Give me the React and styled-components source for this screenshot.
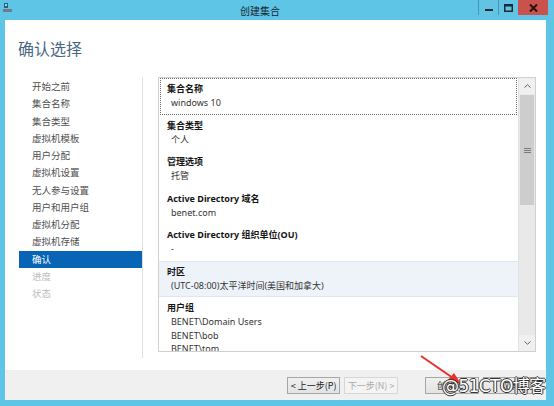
import React from 'react'
import styled, { createGlobalStyle } from 'styled-components'

const GlobalStyle = createGlobalStyle`
  html, body {
    margin: 0;
    padding: 0;
    width: 554px;
    height: 406px;
    overflow: hidden;
  }
  body {
    font-family: "Noto Sans CJK SC", "Noto Sans", sans-serif;
    font-size: 10px;
    color: #1e1e1e;
  }
`

const navItems = [
  { label: '开始之前' },
  { label: '集合名称' },
  { label: '集合类型' },
  { label: '虚拟机模板' },
  { label: '用户分配' },
  { label: '虚拟机设置' },
  { label: '无人参与设置' },
  { label: '用户和用户组' },
  { label: '虚拟机分配' },
  { label: '虚拟机存储' },
  { label: '确认', active: true },
  { label: '进度', disabled: true },
  { label: '状态', disabled: true },
]

const sections = [
  { title: '集合名称', values: ['windows 10'], focus: true },
  { title: '集合类型', values: ['个人'] },
  { title: '管理选项', values: ['托管'] },
  { title: 'Active Directory 域名', values: ['benet.com'] },
  { title: 'Active Directory 组织单位(OU)', values: ['-'] },
  { title: '时区', values: ['(UTC-08:00)太平洋时间(美国和加拿大)'], hover: true },
  { title: '用户组', values: ['BENET\\Domain Users', 'BENET\\bob', 'BENET\\tom'] },
]

const App = () => {
  return (
    <>
      <GlobalStyle />
      <Window>
        <TitleBar>
          <AppIcon>
            <svg width="9" height="9" viewBox="0 0 9 9">
              <rect x="1" y="0" width="4" height="5" fill="#2a5d8c" />
              <rect x="2" y="1" width="2" height="2" fill="#9fd4f0" />
              <rect x="0" y="6" width="9" height="3" fill="#6f7c88" />
            </svg>
          </AppIcon>
          <TitleText>创建集合</TitleText>
          <Caption>
            <CapBtn>
              <svg width="8" height="8" viewBox="0 0 8 8"><rect x="0" y="5" width="8" height="2" fill="#1b2a36" /></svg>
            </CapBtn>
            <CapBtn>
              <svg width="9" height="8" viewBox="0 0 9 8"><rect x="0.75" y="0.75" width="7.5" height="6.5" fill="none" stroke="#1b2a36" strokeWidth="1.5" /><rect x="0" y="0" width="9" height="2.5" fill="#1b2a36" /></svg>
            </CapBtn>
            <CloseBtn>
              <svg width="9" height="8" viewBox="0 0 9 8"><path d="M1 0.5 L8 7.5 M8 0.5 L1 7.5" stroke="#2a1010" strokeWidth="2" /></svg>
            </CloseBtn>
          </Caption>
        </TitleBar>

        <Client>
          <Header>确认选择</Header>
          <Body>
            <Nav>
              {navItems.map((n) => (
                <NavItem key={n.label} $active={n.active} $disabled={n.disabled}>{n.label}</NavItem>
              ))}
            </Nav>
            <Main>
              <Panel>
                <List>
                  {sections.map((s) => (
                    <Section key={s.title} $focus={s.focus} $hover={s.hover}>
                      <SectionTitle>{s.title}</SectionTitle>
                      {s.values.map((v) => (
                        <Value key={v}>{v}</Value>
                      ))}
                    </Section>
                  ))}
                </List>
                <ScrollBar>
                  <ArrowBox>
                    <svg width="7" height="4" viewBox="0 0 7 4"><path d="M0.5 3.5 L3.5 0.8 L6.5 3.5" fill="none" stroke="#606060" /></svg>
                  </ArrowBox>
                  <Track>
                    <Thumb>
                      <Grip />
                    </Thumb>
                  </Track>
                  <ArrowBox>
                    <svg width="7" height="4" viewBox="0 0 7 4"><path d="M0.5 0.5 L3.5 3.2 L6.5 0.5" fill="none" stroke="#606060" /></svg>
                  </ArrowBox>
                </ScrollBar>
              </Panel>
            </Main>
          </Body>
          <Footer>
            <Button>&lt; 上一步(P)</Button>
            <Button disabled>下一步(N) &gt;</Button>
            <Spacer />
            <Button>创建(C)</Button>
            <Button>取消</Button>
          </Footer>
        </Client>

        <Arrow width="60" height="40" viewBox="0 0 60 40">
          <path d="M2 2 L34 24" stroke="#e8302a" strokeWidth="2" />
          <path d="M42 30 L28 27 L35 19 Z" fill="#e8302a" />
        </Arrow>
        <Watermark>@51CTO博客</Watermark>
      </Window>
    </>
  )
}

export default App

const Window = styled.div`
  position: relative;
  width: 554px;
  height: 406px;
  box-sizing: border-box;
  background: #5ec5e7;
  padding: 0 8px 6px 5px;
  display: flex;
  flex-direction: column;
`

const TitleBar = styled.div`
  height: 20px;
  display: flex;
  align-items: flex-start;
  margin-left: -5px;
  margin-right: -8px;
`

const AppIcon = styled.div`
  width: 16px;
  padding: 3px 0 0 3px;
  box-sizing: border-box;
  display: flex;
`

const TitleText = styled.div`
  flex: 1;
  text-align: center;
  padding-left: 26px;
  line-height: 21px;
  font-size: 10px;
  color: #1a2630;
`

const Caption = styled.div`
  display: flex;
  height: 15px;
  margin-right: 6px;
`

const CapBtn = styled.div`
  width: 20px;
  height: 15px;
  box-sizing: border-box;
  border-left: 1px solid #3c9ab8;
  background: #62c4e2;
  display: flex;
  align-items: center;
  justify-content: center;
`

const CloseBtn = styled.div`
  width: 30px;
  height: 15px;
  background: #c9524d;
  display: flex;
  align-items: center;
  justify-content: center;
`

const Client = styled.div`
  flex: 1;
  background: #ffffff;
  display: flex;
  flex-direction: column;
  min-height: 0;
`

const Header = styled.div`
  height: 57px;
  box-sizing: border-box;
  padding: 17px 0 0 13px;
  font-size: 16px;
  line-height: 22px;
  color: #4a6681;
`

const Body = styled.div`
  flex: 1;
  display: flex;
  min-height: 0;
`

const Nav = styled.div`
  width: 138px;
  box-sizing: border-box;
  border-right: 1px solid #e0e0e0;
  padding: 1px 0 0 14px;
  display: flex;
  flex-direction: column;
  margin-bottom: 12px;
`

const NavItem = styled.div`
  height: 17.25px;
  line-height: 17px;
  font-size: 9.5px;
  padding-left: 13px;
  color: ${(p) => (p.$active ? '#ffffff' : p.$disabled ? '#bdbdbd' : '#505050')};
  background: ${(p) => (p.$active ? '#0865b5' : 'transparent')};
`

const Main = styled.div`
  flex: 1;
  padding: 0 10px 18px 15px;
  display: flex;
`

const Panel = styled.div`
  flex: 1;
  border: 1px solid #d0d0d0;
  display: flex;
  min-width: 0;
  overflow: hidden;
`

const List = styled.div`
  flex: 1;
  overflow: hidden;
`

const Section = styled.div`
  padding: 3px 6px 4px 6px;
  margin: 0 1px;
  border: 1px ${(p) => (p.$focus ? 'dotted #6a6a6a' : 'solid transparent')};
  background: ${(p) => (p.$hover ? '#eef3fa' : 'transparent')};
  ${(p) => p.$hover && 'border-top-color: #dde6f2; border-bottom-color: #dde6f2; margin: 0; padding-left: 7px;'}
`

const SectionTitle = styled.div`
  font-weight: bold;
  font-size: 9px;
  line-height: 14px;
  color: #151515;
  font-family: "Noto Sans", "Noto Sans CJK SC", sans-serif;
`

const Value = styled.div`
  font-size: 9px;
  line-height: 13.5px;
  padding-left: 4px;
  color: #333;
  font-family: "Noto Sans", "Noto Sans CJK SC", sans-serif;
`

const ScrollBar = styled.div`
  width: 16px;
  background: #e9e9e9;
  border-left: 1px solid #e2e2e2;
  display: flex;
  flex-direction: column;
`

const ArrowBox = styled.div`
  height: 16px;
  display: flex;
  align-items: center;
  justify-content: center;
  background: #f0f0f0;
`

const Track = styled.div`
  flex: 1;
  padding: 1px 1px 0;
`

const Thumb = styled.div`
  height: 110px;
  background: #cdcdcd;
  display: flex;
  align-items: center;
  justify-content: center;
`

const Grip = styled.div`
  width: 7px;
  height: 5px;
  background: repeating-linear-gradient(to bottom, #7a7a7a 0 1px, transparent 1px 2px);
`

const Footer = styled.div`
  height: 30px;
  background: #f0f0f0;
  display: flex;
  align-items: center;
  padding: 0 10px 0 282px;
  gap: 4px;
`

const Spacer = styled.div`
  width: 20px;
`

const Button = styled.button`
  width: 55px;
  height: 17px;
  padding: 0;
  font-family: "Noto Sans CJK SC", sans-serif;
  font-size: 9px;
  line-height: 15px;
  color: ${(p) => (p.disabled ? '#a8a8a8' : '#222')};
  background: ${(p) => (p.disabled ? '#f4f4f4' : 'linear-gradient(#f0f0f0, #e3e3e3)')};
  border: 1px solid ${(p) => (p.disabled ? '#d6d6d6' : '#a6a6a6')};
  border-radius: 0;
`

const Arrow = styled.svg`
  position: absolute;
  left: 419px;
  top: 354px;
`

const Watermark = styled.div`
  position: absolute;
  left: 442px;
  top: 376px;
  font-family: "DejaVu Sans", "Noto Sans CJK SC", sans-serif;
  font-size: 17px;
  line-height: 20px;
  color: #ffffff;
  letter-spacing: -0.6px;
  text-shadow: 1px 0 #333, -1px 0 #333, 0 1px #333, 0 -1px #333;
`
